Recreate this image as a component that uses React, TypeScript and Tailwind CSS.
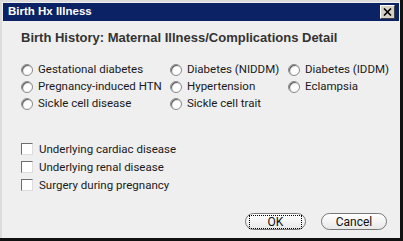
import React from 'react';

const body = { fontFamily: 'Roboto, "Open Sans", sans-serif' };
const bold = { fontFamily: '"Liberation Sans", Arial, sans-serif' };

const radios: string[][] = [
  ['Gestational diabetes', 'Diabetes (NIDDM)', 'Diabetes (IDDM)'],
  ['Pregnancy-induced HTN', 'Hypertension', 'Eclampsia'],
  ['Sickle cell disease', 'Sickle cell trait', ''],
];

const checks = ['Underlying cardiac disease', 'Underlying renal disease', 'Surgery during pregnancy'];

function Radio({ label }: { label: string }) {
  if (!label) return <div />;
  return (
    <div className="flex items-center gap-[5px] h-[17px]">
      <span className="w-[12px] h-[12px] shrink-0 rounded-full border border-[#8a8a8a] bg-white shadow-[inset_1px_1px_1px_#555]" />
      <span className="text-[11.5px] leading-[17px] text-[#1a1a1a] whitespace-nowrap">{label}</span>
    </div>
  );
}

function Check({ label }: { label: string }) {
  return (
    <div className="flex items-center gap-[6px] h-[18px]">
      <span className="w-[12px] h-[12px] shrink-0 border border-[#6e6e6e] border-r-[#dcdcdc] border-b-[#dcdcdc] bg-white" />
      <span className="text-[11.5px] leading-[18px] text-[#1a1a1a] whitespace-nowrap">{label}</span>
    </div>
  );
}

export default function App() {
  return (
    <div className="w-[403px] h-[241px] bg-[#111] overflow-hidden" style={body}>
      <div className="w-[400px] h-[238px] bg-[#efefef] border-l-2 border-t-2 border-[#dcdcdc] flex flex-col">
        <div className="mx-[1px] mt-[1px] h-[18px] shrink-0 bg-[#0b2265] flex items-center justify-between pl-[5px] pr-[4px]">
          <span className="text-white font-bold text-[11.5px] leading-none" style={bold}>
            Birth Hx Illness
          </span>
          <button className="w-[15px] h-[14px] bg-[#d4d0c8] border border-white border-r-[#404040] border-b-[#404040] flex items-center justify-center">
            <svg width="9" height="8" viewBox="0 0 9 8">
              <path d="M1 0.5 L8 7.5 M8 0.5 L1 7.5" stroke="#000" strokeWidth="1.6" />
            </svg>
          </button>
        </div>
        <div className="pl-[19px] pt-[9px] text-[13px] leading-[16px] font-bold text-[#333]" style={bold}>
          Birth History: Maternal Illness/Complications Detail
        </div>
        <div className="pl-[19px] pt-[15px] grid grid-cols-[149px_118px_auto] auto-rows-[17px]">
          {radios.flat().map((r, i) => (
            <Radio key={i} label={r} />
          ))}
        </div>
        <div className="pl-[19px] pt-[28px] flex flex-col">
          {checks.map((c) => (
            <Check key={c} label={c} />
          ))}
        </div>
        <div className="flex justify-end gap-[15px] pr-[13px] pt-[19px]">
          <button className="w-[61px] h-[17px] rounded-full border border-[#777] bg-gradient-to-b from-white to-[#e8e8e8] flex items-center justify-center">
            <span className="border border-dotted border-black px-[18px] text-[12px] leading-[12px] text-[#111]">OK</span>
          </button>
          <button className="w-[66px] h-[17px] rounded-full border border-[#777] bg-gradient-to-b from-white to-[#e8e8e8] text-[12px] leading-none text-[#111] flex items-center justify-center">
            Cancel
          </button>
        </div>
      </div>
    </div>
  );
}
